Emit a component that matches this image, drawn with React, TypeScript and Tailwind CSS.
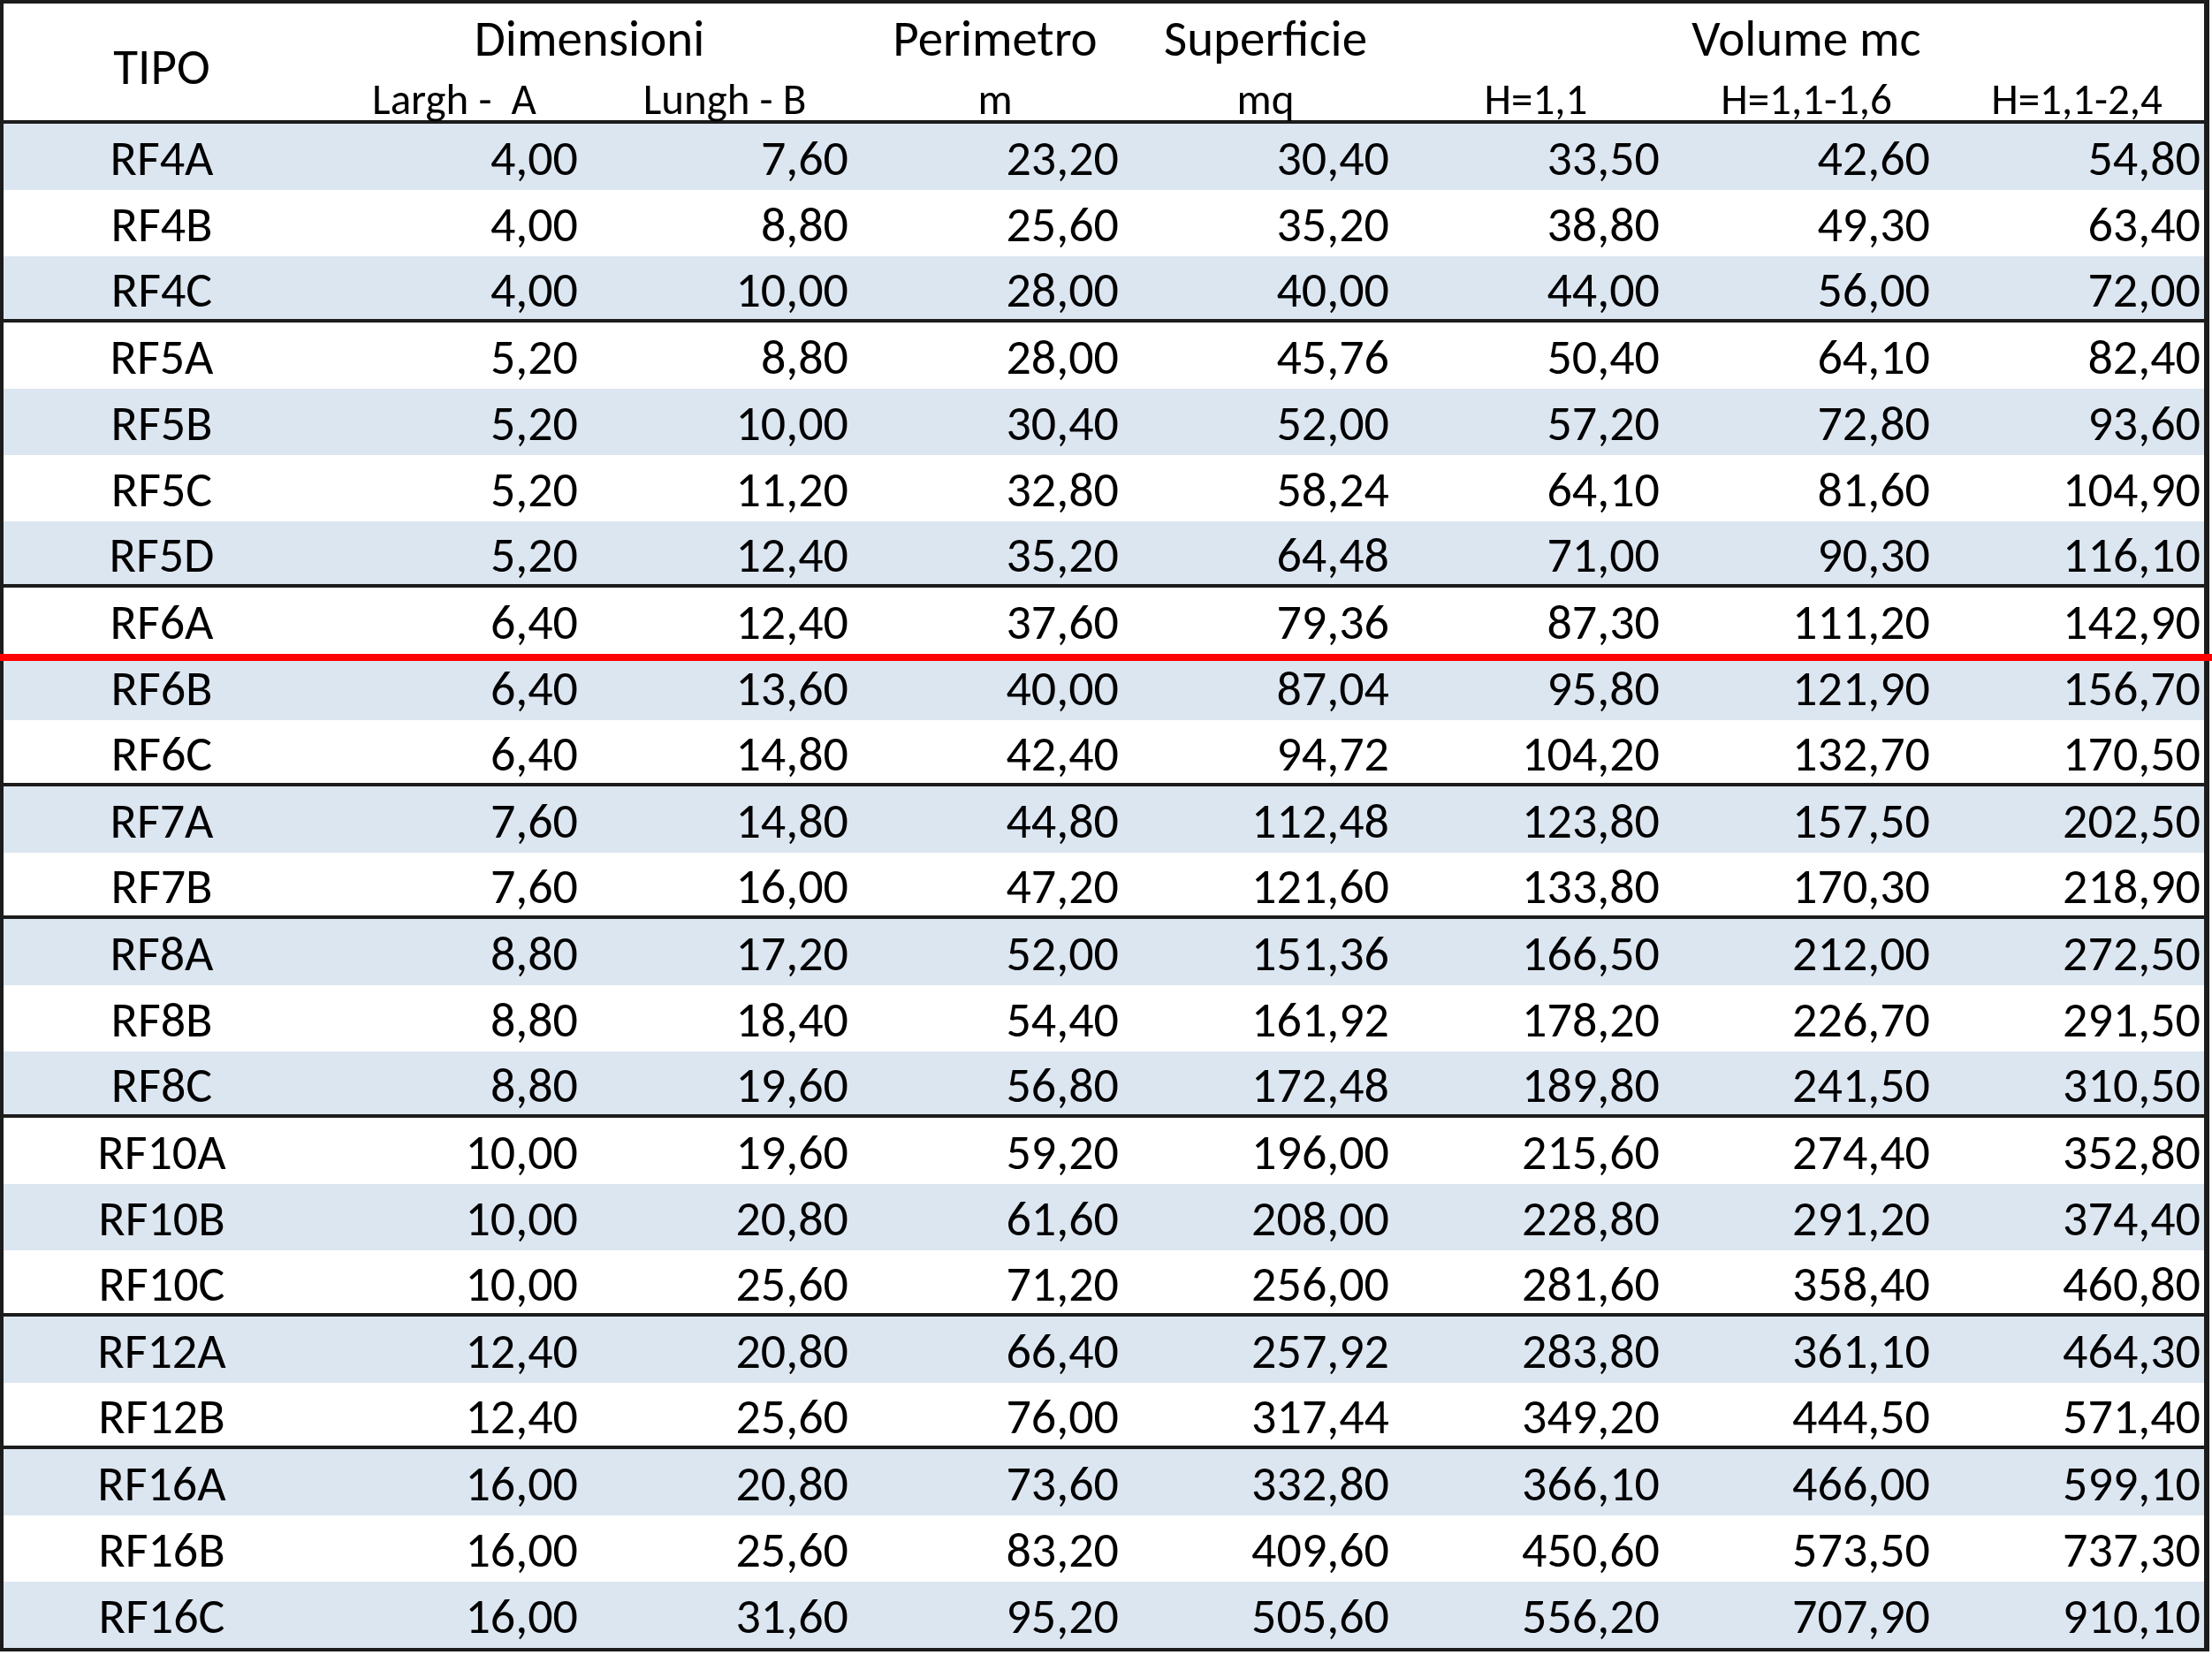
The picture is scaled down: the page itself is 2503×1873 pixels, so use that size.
import React from 'react';

type Row = {
  tipo: string;
  values: string[];
  groupEnd?: boolean;
};

const ROWS: Row[] = [
  { tipo: 'RF4A', values: ['4,00', '7,60', '23,20', '30,40', '33,50', '42,60', '54,80'] },
  { tipo: 'RF4B', values: ['4,00', '8,80', '25,60', '35,20', '38,80', '49,30', '63,40'] },
  { tipo: 'RF4C', values: ['4,00', '10,00', '28,00', '40,00', '44,00', '56,00', '72,00'], groupEnd: true },
  { tipo: 'RF5A', values: ['5,20', '8,80', '28,00', '45,76', '50,40', '64,10', '82,40'] },
  { tipo: 'RF5B', values: ['5,20', '10,00', '30,40', '52,00', '57,20', '72,80', '93,60'] },
  { tipo: 'RF5C', values: ['5,20', '11,20', '32,80', '58,24', '64,10', '81,60', '104,90'] },
  { tipo: 'RF5D', values: ['5,20', '12,40', '35,20', '64,48', '71,00', '90,30', '116,10'], groupEnd: true },
  { tipo: 'RF6A', values: ['6,40', '12,40', '37,60', '79,36', '87,30', '111,20', '142,90'] },
  { tipo: 'RF6B', values: ['6,40', '13,60', '40,00', '87,04', '95,80', '121,90', '156,70'] },
  { tipo: 'RF6C', values: ['6,40', '14,80', '42,40', '94,72', '104,20', '132,70', '170,50'], groupEnd: true },
  { tipo: 'RF7A', values: ['7,60', '14,80', '44,80', '112,48', '123,80', '157,50', '202,50'] },
  { tipo: 'RF7B', values: ['7,60', '16,00', '47,20', '121,60', '133,80', '170,30', '218,90'], groupEnd: true },
  { tipo: 'RF8A', values: ['8,80', '17,20', '52,00', '151,36', '166,50', '212,00', '272,50'] },
  { tipo: 'RF8B', values: ['8,80', '18,40', '54,40', '161,92', '178,20', '226,70', '291,50'] },
  { tipo: 'RF8C', values: ['8,80', '19,60', '56,80', '172,48', '189,80', '241,50', '310,50'], groupEnd: true },
  { tipo: 'RF10A', values: ['10,00', '19,60', '59,20', '196,00', '215,60', '274,40', '352,80'] },
  { tipo: 'RF10B', values: ['10,00', '20,80', '61,60', '208,00', '228,80', '291,20', '374,40'] },
  { tipo: 'RF10C', values: ['10,00', '25,60', '71,20', '256,00', '281,60', '358,40', '460,80'], groupEnd: true },
  { tipo: 'RF12A', values: ['12,40', '20,80', '66,40', '257,92', '283,80', '361,10', '464,30'] },
  { tipo: 'RF12B', values: ['12,40', '25,60', '76,00', '317,44', '349,20', '444,50', '571,40'], groupEnd: true },
  { tipo: 'RF16A', values: ['16,00', '20,80', '73,60', '332,80', '366,10', '466,00', '599,10'] },
  { tipo: 'RF16B', values: ['16,00', '25,60', '83,20', '409,60', '450,60', '573,50', '737,30'] },
  { tipo: 'RF16C', values: ['16,00', '31,60', '95,20', '505,60', '556,20', '707,90', '910,10'] },
];

const SUBHEADERS = ['Largh -  A', 'Lungh - B', 'm', 'mq', 'H=1,1', 'H=1,1-1,6', 'H=1,1-2,4'];

const GRID = 'grid grid-cols-[348px_repeat(7,306px)]';

export default function App() {
  return (
    <div
      className="relative w-[2503px] h-[1873px] bg-white text-black"
      style={{ fontFamily: 'Carlito, Lato, "Liberation Sans", sans-serif' }}
    >
      <div className="w-[2500px] border-t-4 border-b-4 border-l-4 border-r-[6px] border-[#1c1c1c]">
        {/* Header */}
        <div className={`${GRID} grid-rows-[68px_68px] h-[136px] border-b-4 border-[#1c1c1c] leading-none`}>
          <div className="row-span-2 flex items-center justify-center pl-[10px] pt-[6px] text-[57px]">TIPO</div>
          <div className="col-span-2 flex items-end justify-center pl-[18px] text-[57px]">Dimensioni</div>
          <div className="flex items-end justify-center pl-[18px] text-[57px]">Perimetro</div>
          <div className="flex items-end justify-center pl-[18px] text-[57px]">Superficie</div>
          <div className="col-span-3 flex items-end justify-center pl-[18px] text-[57px]">Volume mc</div>
          {SUBHEADERS.map((s) => (
            <div key={s} className="flex items-end justify-center pl-[18px] pb-[3px] text-[49px] whitespace-pre">
              {s}
            </div>
          ))}
        </div>

        {/* Rows */}
        {ROWS.map((row, i) => (
          <div
            key={row.tipo}
            className={`${GRID} h-[75px] text-[56px] leading-[1.2] ${i % 2 === 0 ? 'bg-[#dce6f1]' : 'bg-white'} ${
              row.groupEnd ? 'border-b-4 border-[#1c1c1c]' : ''
            }`}
          >
            <div className="flex items-center justify-center pl-[10px] pt-[5px]">{row.tipo}</div>
            {row.values.map((v, j) => (
              <div key={j} className="flex items-center justify-end pr-[4px] pt-[5px]">
                {v}
              </div>
            ))}
          </div>
        ))}
      </div>

      {/* red marker line drawn over the sheet */}
      <div className="absolute left-0 top-[740px] h-[8px] w-[2503px] bg-[#ff0000]" />
    </div>
  );
}
